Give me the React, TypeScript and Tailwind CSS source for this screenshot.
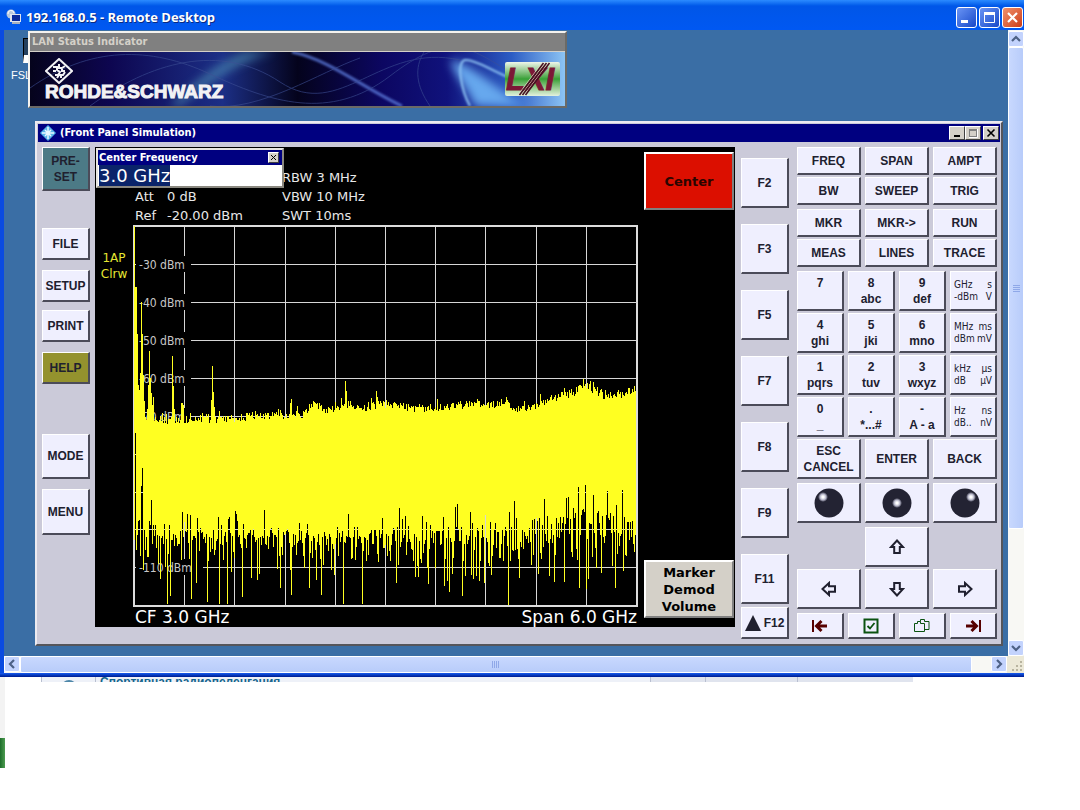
import { useState } from "react";
import type { ReactNode } from "react";
import clsx from "clsx";

const UI = "font-['Liberation_Sans',Arial,sans-serif]";
const TAHOMA = "font-['DejaVu_Sans_Condensed','DejaVu_Sans',sans-serif]";
const VERDANA = "font-['DejaVu_Sans',Verdana,sans-serif]";

const functionKeys = ["F2", "F3", "F5", "F7", "F8", "F9", "F11"];

const menuKeys = [
  ["FREQ", "SPAN", "AMPT"],
  ["BW", "SWEEP", "TRIG"],
  ["MKR", "MKR->", "RUN"],
  ["MEAS", "LINES", "TRACE"],
];

const numberKeys = [
  { keys: [["7", ""], ["8", "abc"], ["9", "def"]], units: [["GHz", "s"], ["-dBm", "V"]] },
  { keys: [["4", "ghi"], ["5", "jki"], ["6", "mno"]], units: [["MHz", "ms"], ["dBm", "mV"]] },
  { keys: [["1", "pqrs"], ["2", "tuv"], ["3", "wxyz"]], units: [["kHz", "µs"], ["dB", "µV"]] },
  { keys: [["0", "_"], [".", "*...#"], ["-", "A - a"]], units: [["Hz", "ns"], ["dB..", "nV"]] },
];

// Noise floor of the sweep: [x, y] in chart units
const floorPoints = [
  [0, 190], [25, 194], [90, 194], [120, 190], [150, 189], [170, 188], [180, 178],
  [195, 184], [217, 178], [230, 183], [245, 178], [262, 180], [285, 183], [305, 181],
  [330, 179], [345, 176], [352, 180], [372, 177], [382, 183], [400, 180], [412, 175],
  [428, 170], [440, 167], [451, 157], [458, 163], [472, 170], [490, 168], [505, 159],
];

const peaks: Record<number, number> = {
  1: 1, 2: 62, 3: 62, 4: 109, 5: 160, 6: 165, 7: 148, 8: 77, 9: 109, 10: 150, 11: 176,
  12: 192, 13: 195, 14: 184, 15: 160, 16: 126, 17: 153, 18: 168, 19: 180, 20: 172,
  39: 131, 40: 161, 41: 184, 48: 178, 49: 178, 50: 180, 78: 175, 79: 141, 80: 167, 81: 182,
  157: 178, 158: 174, 212: 156, 213: 166, 243: 166, 244: 172, 450: 154,
};

const dips: Record<number, number> = {
  2: 208, 3: 325, 4: 310, 5: 296, 6: 295, 8: 261, 9: 243, 12: 325, 18: 275, 34: 379, 37: 371,
  58: 374, 74: 377, 86: 379, 94: 379, 102: 286, 131: 285, 188: 370, 210: 379, 229: 379, 251: 323,
  266: 283, 316: 367, 324: 279, 351: 358, 375: 380, 381: 276, 411: 274, 421: 357,
  431: 357, 445: 262, 446: 363, 452: 260, 460: 270, 489: 265, 490: 346,
};

const noise = (() => {
  let seed = 4711;
  return () => {
    seed = (seed * 16807) % 2147483647;
    return seed / 2147483647;
  };
})();

const floorAt = (x: number) => {
  const i = floorPoints.findIndex((p) => p[0] > x);
  const [x0, y0] = floorPoints[i - 1];
  const [x1, y1] = floorPoints[i];
  return y0 + ((y1 - y0) * (x - x0)) / (x1 - x0);
};

const bottomAt = (x: number) => {
  const lift = x > 400 ? 14 : 0;
  const tail = -Math.log(1 - noise() * 0.97);
  if (noise() < 0.5) {
    return 314 - lift - tail * 10;
  }
  return 314 - lift / 2 + tail * 17;
};

const tracePath = Array.from({ length: 502 }, (_, i) => {
  const x = i + 1;
  const top = peaks[x] ?? Math.round(floorAt(x) + noise() * 8 - 3 - (noise() > 0.85 ? noise() * 7 : 0));
  const bottom = dips[x] ?? Math.round(bottomAt(x));
  return `M${x + 0.5} ${top}V${Math.min(bottom, 380)}`;
}).join("");

function Key({ children, className, label }: { children: ReactNode; className?: string; label?: string }) {
  return (
    <button
      type="button"
      aria-label={label}
      className={clsx(
        "flex items-center justify-center border-t border-l border-r-2 border-b-2 border-t-white border-l-white border-r-[#4b4b59] border-b-[#4b4b59] text-xs leading-4 font-bold text-[#20202f] active:border-t-[#4b4b59] active:border-l-[#4b4b59]",
        UI,
        className
      )}
    >
      {children}
    </button>
  );
}

function BlockArrow({ className }: { className?: string }) {
  return (
    <svg viewBox="0 0 16 16" className={clsx("size-4", className)}>
      <path d="M8 1.5 14 8H10.8V14H5.2V8H2Z" fill="none" stroke="#20202f" strokeWidth="2" />
    </svg>
  );
}

function Knob({ id, cx, cy }: { id: string; cx: number; cy: number }) {
  return (
    <svg viewBox="0 0 30 30" className="size-[30px]">
      <defs>
        <radialGradient id={id}>
          <stop offset="0.2" stopColor="#ffffff" />
          <stop offset="0.6" stopColor="#b5b5c8" />
          <stop offset="1" stopColor="#232333" />
        </radialGradient>
      </defs>
      <circle cx="15" cy="15" r="14.5" fill="#232333" />
      <circle cx={cx} cy={cy} r="5" fill={`url(#${id})`} />
    </svg>
  );
}

function ScrollArrow({ label, className }: { label: string; className?: string }) {
  return (
    <button
      type="button"
      aria-label={label}
      className="flex size-4 shrink-0 items-center justify-center rounded-xs border border-white bg-[#c3d3fd]"
    >
      <svg viewBox="0 0 10 10" className={clsx("size-[10px]", className)}>
        <path d="M1 7 5 3 9 7" fill="none" stroke="#4d6185" strokeWidth="2.2" />
      </svg>
    </button>
  );
}

function TitleBar() {
  const button = "flex size-[21px] items-center justify-center rounded-[3px] border border-white";
  return (
    <header className="flex h-[30px] items-center bg-linear-to-b from-[#2b8bff] via-[#0056e8] via-20% to-[#0058f2] pt-1 pr-px pl-[6px]">
      <svg viewBox="0 0 16 16" className="size-4">
        <circle cx="5" cy="5" r="4.5" fill="#b8c8dc" />
        <path d="M2 5a3 3 0 0 1 6-1" fill="none" stroke="#fff" />
        <rect x="4" y="5" width="11" height="8" fill="#dfe4ee" />
        <rect x="6" y="6" width="8" height="6" fill="#0a2a9a" />
        <rect x="6" y="13" width="8" height="2" fill="#a8b0bc" />
      </svg>
      <h1 className="flex-1 pl-1 font-['Open_Sans',sans-serif] text-[13px] leading-5 font-bold text-white [text-shadow:1px_1px_#0a2a80]">
        192.168.0.5 - Remote Desktop
      </h1>
      <div className="flex gap-[2px]">
        <button type="button" aria-label="Minimize" className={clsx(button, "bg-linear-to-br from-[#6a94f5] to-[#1746c8]")}>
          <svg viewBox="0 0 13 13" className="size-[13px]">
            <rect x="1" y="9" width="7" height="3" fill="#fff" />
          </svg>
        </button>
        <button type="button" aria-label="Maximize" className={clsx(button, "bg-linear-to-br from-[#6a94f5] to-[#1746c8]")}>
          <svg viewBox="0 0 13 13" className="size-[13px]">
            <path d="M1.5 2V11.5H11.5V2" fill="none" stroke="#fff" />
            <rect x="1" y="1" width="11" height="3" fill="#fff" />
          </svg>
        </button>
        <button type="button" aria-label="Close" className={clsx(button, "bg-linear-to-br from-[#f0906c] to-[#cc3a10]")}>
          <svg viewBox="0 0 13 13" className="size-[13px]">
            <path d="M2 2 11 11M11 2 2 11" stroke="#fff" strokeWidth="2.2" />
          </svg>
        </button>
      </div>
    </header>
  );
}

function LanStatus() {
  return (
    <section className="relative mr-[441px] ml-6 border-2 border-t-[#f4f2ee] border-r-[#6b6a66] border-b-[#6b6a66] border-l-[#f4f2ee] bg-[#d4d0c8]">
      <h2 className={clsx("mb-px bg-[#808080] pl-[2px] text-[11px] leading-[18px] font-bold text-[#d4d0c8]", TAHOMA)}>
        LAN Status Indicator
      </h2>
      <div className="relative flex h-[54px] items-center justify-between bg-[#060530] pr-[5px] pl-[15px]">
        <svg viewBox="0 0 535 54" preserveAspectRatio="none" className="absolute inset-0 size-full">
          <defs>
            <linearGradient id="sky">
              <stop offset="0" stopColor="#05031c" />
              <stop offset="0.15" stopColor="#0d0650" />
              <stop offset="0.36" stopColor="#1c2f86" />
              <stop offset="0.5" stopColor="#04031c" />
              <stop offset="0.66" stopColor="#0c0762" />
              <stop offset="0.78" stopColor="#10127c" />
              <stop offset="0.9" stopColor="#2c5cc4" />
              <stop offset="1" stopColor="#8cc4f4" />
            </linearGradient>
            <filter id="soft" x="-30%" y="-30%" width="160%" height="160%">
              <feGaussianBlur stdDeviation="5" />
            </filter>
            <filter id="glow">
              <feGaussianBlur stdDeviation="1" />
            </filter>
          </defs>
          <rect width="535" height="54" fill="url(#sky)" />
          <path d="M150 54C180 30 210 8 245 0H215C185 12 160 34 140 54Z" fill="#4c8cb0" opacity="0.7" filter="url(#soft)" />
          <path d="M420 8C440 10 470 40 495 54H445C440 40 425 24 420 8Z" fill="#66a8ee" filter="url(#soft)" />
          <path d="M262 0C300 8 330 34 372 54" fill="none" stroke="#5a78d8" strokeWidth="3" opacity="0.8" filter="url(#glow)" />
          <path d="M440 54C432 40 425 8 436 8S460 18 480 26" fill="none" stroke="#8ec4f4" strokeWidth="2" filter="url(#glow)" />
          <g fill="none" stroke="#3d4f94" opacity="0.6">
            <path d="M0 36C60-6 120-6 180 22S300 70 360 24 440-4 480 20" />
            <path d="M60 54C120 10 190-10 250 30S350-10 430 8" />
            <path d="M180 54C230 60 290 20 330 6M400 54C386 34 384 16 394 0" />
          </g>
        </svg>
        <div className="relative text-[#f2f2f4]">
          <svg viewBox="0 0 28 26" className="h-[26px] w-7">
            <path d="M14 1 27 13 14 25 1 13Z" fill="none" stroke="currentColor" strokeWidth="2" />
            <path d="M8 9h4v3l3 2-2 3h-3M14 6v4h3l3-2M17 10v3h3M8 13h3M12 20l2-3h4l2-3M16 17v3" fill="none" stroke="currentColor" strokeWidth="2" />
          </svg>
          <p className={clsx("text-[19px] leading-4 font-bold [-webkit-text-stroke:1px_#f2f2f4]", UI)}>ROHDE&amp;SCHWARZ</p>
        </div>
        <div className="relative h-[34px] w-[55px] rounded-xs bg-linear-to-b from-[#eef6ea] via-[#35a035] to-[#e4f2de]">
          <svg viewBox="0 0 55 34" className="size-full overflow-visible">
            <text x="1" y="28" fontSize="31" fontWeight="700" fontStyle="italic" fill="#7c1836" stroke="#7c1836" strokeWidth="1" className={UI}>
              LXI
            </text>
            <path d="M13 33 37 1M16 33 40 1M19 33 43 1" stroke="#e6dcc8" strokeWidth="0.8" />
            <path d="M14.500 33 38.500 1M17.500 33 41.500 1M20.500 33 44.500 1" stroke="#471022" strokeWidth="1.500" />
          </svg>
        </div>
      </div>
    </section>
  );
}

function SpectrumChart() {
  return (
    <svg viewBox="0 0 505 382" className="min-w-0 flex-1" shapeRendering="crispEdges" role="img" aria-label="Spectrum trace">
      <g stroke="#d6d6d6">
        {[51, 101, 152, 202, 252, 302, 352, 403, 453].map((x) => (
          <path key={x} d={`M${x + 0.5} 1V381`} />
        ))}
        {[39, 77, 115, 153, 191, 229, 267, 304, 342].map((y) => (
          <path key={y} d={`M1 ${y + 0.5}H504`} />
        ))}
      </g>
      <rect x="1" y="1" width="503" height="380" fill="none" stroke="#dcdcdc" strokeWidth="2" />
      {[
        [39, -30],
        [77, -40],
        [115, -50],
        [153, -60],
        [191, -70],
        [342, -110],
      ].map(([y, level]) => (
        <g key={level}>
          <rect x="3" y={y - 8} width={level === -110 ? 67 : 55} height="16" fill="#000" />
          <text x="6" y={y + 5} fontSize="12" fill="#c8c8c8" className={TAHOMA}>
            {level} dBm
          </text>
        </g>
      ))}
      <path d={tracePath} stroke="#ffff21" />
    </svg>
  );
}

function Screen() {
  const [frequency, setFrequency] = useState("3.0 GHz");
  const softKey =
    "flex h-[58px] w-full items-center justify-center border-2 border-t-white border-r-[#808080] border-b-[#808080] border-l-white text-[13px] leading-[17px] font-bold";

  return (
    <main className={clsx("relative flex min-w-0 flex-1 bg-black text-[13px] text-[#e8e8e8]", VERDANA)}>
      <div className="flex min-w-0 flex-1 flex-col pt-[21px] pr-[6px]">
        <div className="grid grid-cols-[32px_115px_1fr] pl-10 leading-[19px]">
          <span className="col-start-3">RBW 3 MHz</span>
          <span>Att</span>
          <span>0 dB</span>
          <span>VBW 10 MHz</span>
          <span>Ref</span>
          <span>-20.00 dBm</span>
          <span>SWT 10ms</span>
        </div>
        <div className="flex">
          <p className="w-[38px] pt-[25px] text-center text-xs leading-4 text-[#e6e632]">
            1AP
            <br />
            Clrw
          </p>
          <SpectrumChart />
        </div>
        <div className="flex justify-between pr-px pl-10 text-[17px] leading-5 text-white">
          <span>CF 3.0 GHz</span>
          <span>Span 6.0 GHz</span>
        </div>
      </div>
      <div className="flex w-[91px] flex-col justify-between pt-[5px] pr-px pb-[9px]">
        <button type="button" className={clsx(softKey, "bg-[#dc0f00] text-[#2a0500]")}>
          Center
        </button>
        <button type="button" className={clsx(softKey, "bg-[#d4d0c8] text-black")}>
          Marker
          <br />
          Demod
          <br />
          Volume
        </button>
      </div>

      <div className="absolute top-px left-px w-[188px] border-2 border-t-[#e8e6e0] border-r-[#8a8880] border-b-[#8a8880] border-l-[#e8e6e0] bg-white">
        <div className="flex items-center justify-between bg-[#000080] pr-[3px] pl-px">
          <label htmlFor="frequency" className={clsx("text-[11px] leading-[15px] font-bold text-white", TAHOMA)}>
            Center Frequency
          </label>
          <button type="button" aria-label="Close" className="flex size-[11px] items-center justify-center border border-white border-r-[#404040] border-b-[#404040] bg-[#d4d0c8]">
            <svg viewBox="0 0 7 7" className="size-[7px]">
              <path d="M1 1 6 6M6 1 1 6" stroke="#000" />
            </svg>
          </button>
        </div>
        <div className="flex h-[21px] pl-px">
          <input
            id="frequency"
            value={frequency}
            onChange={(e) => setFrequency(e.target.value)}
            className="field-sizing-content max-w-full bg-[#0a246a] text-lg leading-[21px] text-white outline-none"
          />
        </div>
      </div>
    </main>
  );
}

function SideKeys() {
  const plain = "bg-[#efeffe]";
  return (
    <div className="flex w-12 flex-col">
      <Key className="h-11 bg-[#4c7a86]">
        PRE-
        <br />
        SET
      </Key>
      <Key className={clsx("mt-[37px] h-8", plain)}>FILE</Key>
      <Key className={clsx("mt-[10px] h-8", plain)}>SETUP</Key>
      <Key className={clsx("mt-2 h-8", plain)}>PRINT</Key>
      <Key className="mt-[10px] h-8 bg-[#94922e]">HELP</Key>
      <Key className={clsx("mt-[50px] h-[45px]", plain)}>MODE</Key>
      <Key className={clsx("mt-[10px] h-[46px]", plain)}>MENU</Key>
    </div>
  );
}

function FunctionKeys() {
  return (
    <div className="flex w-12 flex-col pt-[11px]">
      <div className="flex flex-col gap-4">
        {functionKeys.map((name) => (
          <Key key={name} className="h-[50px] bg-[#efeffe]">
            {name}
          </Key>
        ))}
      </div>
      <Key className="mt-[3px] h-8 gap-[3px] bg-[#efeffe]">
        <svg viewBox="0 0 16 16" className="size-4">
          <path d="M8 0 16 16H0Z" fill="#20202f" />
        </svg>
        F12
      </Key>
    </div>
  );
}

function Keypad() {
  const row3 = "grid grid-cols-3 gap-1";
  const row4 = "grid grid-cols-4 gap-1";
  const tall = "h-10 bg-[#efeffe]";
  const low = "h-[26px] bg-[#efeffe]";
  return (
    <div className="flex w-[200px] flex-col gap-1">
      {[menuKeys.slice(0, 2), menuKeys.slice(2)].map((rows, i) => (
        <div key={i} className="grid grid-cols-3 gap-x-1 gap-y-[2px]">
          {rows.flat().map((name) => (
            <Key key={name} className="h-7 bg-[#efeffe]">
              {name}
            </Key>
          ))}
        </div>
      ))}

      <div className="grid grid-cols-4 gap-x-1 gap-y-[2px]">
        {numberKeys.map(({ keys, units }) => [
          ...keys.map(([digit, letters]) => (
            <Key key={digit} className={tall}>
              <span>
                <span className="block h-4">{digit}</span>
                <span className="block h-4">{letters}</span>
              </span>
            </Key>
          )),
          <Key key={units[0][0]} className={tall}>
            <span className={clsx("block w-[38px] text-[10px] leading-3 font-normal", TAHOMA)}>
              {units.map(([left, right]) => (
                <span key={left} className="flex justify-between">
                  <span>{left}</span>
                  <span>{right}</span>
                </span>
              ))}
            </span>
          </Key>,
        ])}
      </div>

      <div className={clsx(row3, "-mt-[2px]")}>
        <Key className={tall}>
          ESC
          <br />
          CANCEL
        </Key>
        <Key className={tall}>ENTER</Key>
        <Key className={tall}>BACK</Key>
      </div>

      <div className={row3}>
        <Key label="Turn left" className={tall}>
          <Knob id="knob-left" cx={9} cy={9} />
        </Key>
        <Key label="Press knob" className={tall}>
          <Knob id="knob-press" cx={15} cy={15} />
        </Key>
        <Key label="Turn right" className={tall}>
          <Knob id="knob-right" cx={21} cy={9} />
        </Key>
      </div>

      <div className="grid grid-cols-3 gap-x-1 gap-y-[2px]">
        <Key label="Up" className={clsx("col-start-2", tall)}>
          <BlockArrow />
        </Key>
        <Key label="Left" className={clsx("col-start-1", tall)}>
          <BlockArrow className="-rotate-90" />
        </Key>
        <Key label="Down" className={tall}>
          <BlockArrow className="rotate-180" />
        </Key>
        <Key label="Right" className={tall}>
          <BlockArrow className="rotate-90" />
        </Key>
      </div>

      <div className={row4}>
        <Key label="Previous field" className={low}>
          <svg viewBox="0 0 16 14" className="h-[14px] w-4">
            <path d="M1 1V13" stroke="#560000" strokeWidth="2" />
            <path d="M4 7H15M9.500 2 4.500 7 9.500 12" fill="none" stroke="#560000" strokeWidth="3" />
          </svg>
        </Key>
        <Key label="Check" className={low}>
          <svg viewBox="0 0 16 16" className="size-4">
            <rect x="1.500" y="1.500" width="13" height="13" fill="none" stroke="#0a5210" strokeWidth="2" />
            <path d="M4.500 8 7 10.500 11.500 5" fill="none" stroke="#0a5210" strokeWidth="1.800" />
          </svg>
        </Key>
        <Key label="Switch tab" className={low}>
          <svg viewBox="0 0 16 14" className="h-[14px] w-4">
            <path d="M.5 4.500H3.500V2.500H6.500V4.500H10.500V12.500H.5ZM6.500 2.500V.5H10.500V2.500H15V10.500H10.500" fill="none" stroke="#0a5210" />
          </svg>
        </Key>
        <Key label="Next field" className={low}>
          <svg viewBox="0 0 16 14" className="h-[14px] w-4">
            <path d="M15 1V13" stroke="#560000" strokeWidth="2" />
            <path d="M12 7H1M6.500 2 11.500 7 6.500 12" fill="none" stroke="#560000" strokeWidth="3" />
          </svg>
        </Key>
      </div>
    </div>
  );
}

function FrontPanel() {
  const button = "flex h-[14px] w-4 items-center justify-center border border-white border-r-[#404040] border-b-[#404040] bg-[#d4d0c8]";
  return (
    <section className="mt-[13px] mr-[5px] ml-[31px] border-2 border-t-[#eceaf0] border-r-[#55555a] border-b-[#55555a] border-l-[#eceaf0] bg-[#cbcad9] p-px">
      <div className="flex h-[18px] items-center bg-[#000080] pr-px pl-[2px]">
        <svg viewBox="0 0 16 16" className="size-4">
          <path d="M8 0 16 8 8 16 0 8Z" fill="#58b4e8" />
          <path d="M8 2V7M8 9v5M2 8h5M9 8h5M5 5l6 6M11 5l-6 6" stroke="#e8f8ff" strokeWidth="1.500" />
        </svg>
        <h2 className={clsx("flex-1 pl-1 text-[11px] leading-[18px] font-bold text-white", TAHOMA)}>(Front Panel Simulation)</h2>
        <div className="flex">
          <button type="button" aria-label="Minimize panel" className={button}>
            <svg viewBox="0 0 10 10" className="size-[10px]">
              <rect x="2" y="7" width="6" height="2" />
            </svg>
          </button>
          <button type="button" aria-label="Maximize panel" disabled className={button}>
            <svg viewBox="0 0 10 10" className="size-[10px]">
              <rect x="1.500" y="1.500" width="7" height="7" fill="none" stroke="#808080" />
              <path d="M1 2.500H9" stroke="#808080" />
              <path d="M9.500 1V9.500H1" fill="none" stroke="#fff" />
            </svg>
          </button>
          <button type="button" aria-label="Close panel" className={clsx(button, "ml-[2px]")}>
            <svg viewBox="0 0 10 10" className="size-[10px]">
              <path d="M1.500 1.500 8.500 8.500M8.500 1.500 1.500 8.500" stroke="#000" strokeWidth="1.600" />
            </svg>
          </button>
        </div>
      </div>
      <div className="flex items-start pt-[5px] pr-[3px] pb-1 pl-1">
        <SideKeys />
        <div className="ml-[5px] flex min-w-0 flex-1">
          <Screen />
        </div>
        <div className="ml-[6px] flex gap-2">
          <FunctionKeys />
          <Keypad />
        </div>
      </div>
    </section>
  );
}

export default function App() {
  return (
    <div className="min-h-screen bg-white">
      <div className="mr-14 bg-[#0a3fd6]">
        <TitleBar />
        <div className="flex border-l-4 border-[#0a4be0]">
          <div className="relative min-w-0 flex-1 bg-[#3a6ea5] pt-px pb-[10px]">
            <div className="absolute top-2 left-[7px] flex flex-col items-end">
              <div className="h-[25px] w-2 border border-black border-b-8 border-b-white bg-[#24405e]" />
              <span className={clsx("pt-1 text-[11px] text-white", UI)}>FSL</span>
            </div>
            <LanStatus />
            <FrontPanel />
          </div>
          <div className="flex w-4 flex-col bg-[#f8f8f4] pt-px">
            <ScrollArrow label="Scroll up" />
            <div className="flex flex-[13] flex-col items-center justify-center gap-px rounded-xs border border-white bg-linear-to-r from-[#c8d8fe] to-[#b8ccfa]">
              {[0, 1, 2, 3].map((i) => (
                <span key={i} className="h-px w-[7px] bg-[#8fa8e8]" />
              ))}
            </div>
            <div className="flex-[3]" />
            <ScrollArrow label="Scroll down" className="rotate-180" />
          </div>
        </div>
        <div className="flex h-[17px] border-l-4 border-[#0a4be0] bg-[#f8f8f4]">
          <ScrollArrow label="Scroll left" className="-rotate-90" />
          <div className="flex flex-[98] items-center justify-center gap-px rounded-xs border border-white bg-linear-to-b from-[#c8d8fe] to-[#b8ccfa]">
            {[0, 1, 2, 3].map((i) => (
              <span key={i} className="h-[7px] w-px bg-[#8fa8e8]" />
            ))}
          </div>
          <div className="flex-[2]" />
          <ScrollArrow label="Scroll right" className="rotate-90" />
          <svg viewBox="0 0 17 17" className="size-[17px] bg-[#ece9d8]">
            <path d="M13 5h2v2h-2zM9 9h2v2h-2zM13 9h2v2h-2zM5 13h2v2h-2zM9 13h2v2h-2zM13 13h2v2h-2z" fill="#b8b4a0" />
          </svg>
        </div>
        <div className="h-1 bg-linear-to-b from-[#1a5cf0] to-[#001a90]" />
      </div>

      <div className="flex items-start">
        <div className="w-[5px]">
          <div className="h-[61px] bg-[#f3f3f3]" />
          <div className="h-[30px] bg-linear-to-r from-[#1c6e2a] to-[#4c9c50]" />
        </div>
        <div className="mr-[167px] ml-9 flex h-[5px] flex-1 overflow-hidden bg-[#e0e4ee]">
          <div className="flex w-[54px] justify-center border-l border-[#b8bfd0] bg-[#eef1f8]">
            <span className="mt-[3px] size-4 rounded-full border-2 border-[#4c86a8]" />
          </div>
          <a href="#forum" className={clsx("flex-1 border-l border-[#b8bfd0] bg-[#eef1f8] pl-1 text-xs leading-[10px] font-bold text-[#14648c]", UI)}>
            Спортивная радиопеленгация
          </a>
          <div className="w-[55px] border-l border-[#b8bfd0]" />
          <div className="w-[92px] border-l border-[#b8bfd0]" />
          <div className="w-[116px] border-l border-[#b8bfd0]" />
        </div>
      </div>
    </div>
  );
}
